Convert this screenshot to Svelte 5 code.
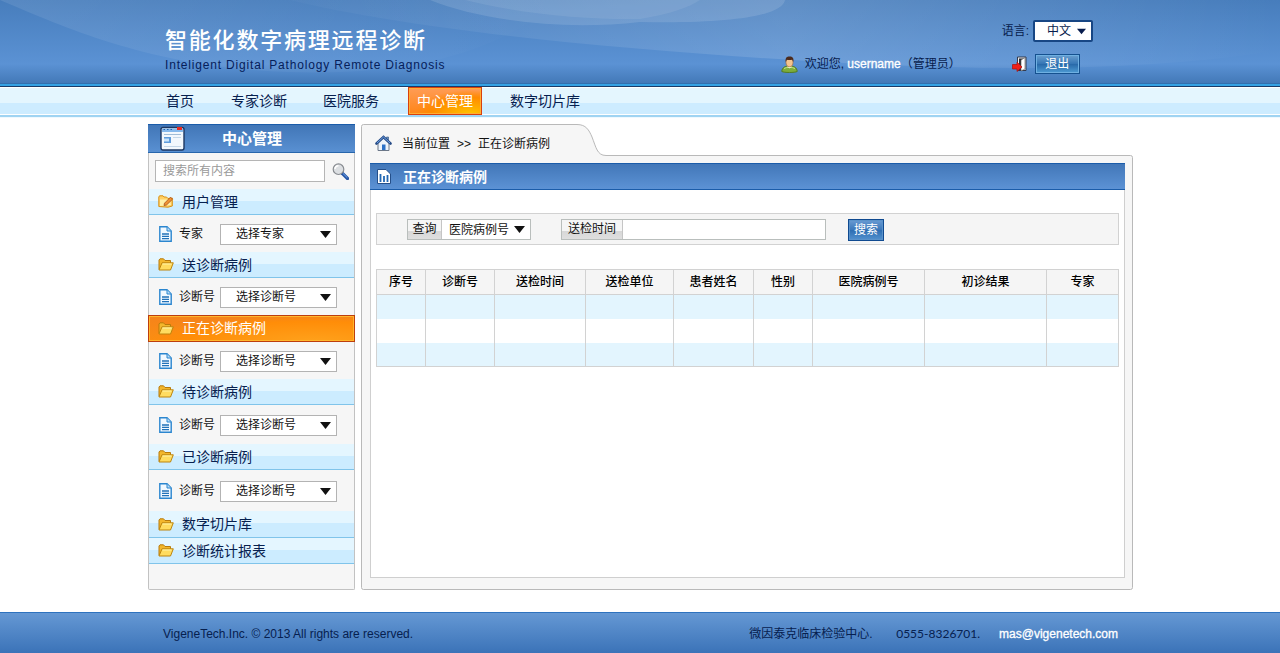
<script lang="ts">
	type MenuItem = {
		title: string;
		label?: string;
		option?: string;
		active?: boolean;
		edit?: boolean;
		size?: string;
	};

	const nav = ['首页', '专家诊断', '医院服务', '中心管理', '数字切片库'];

	const menu: MenuItem[] = [
		{ title: '用户管理', label: '专家', option: '选择专家', edit: true },
		{ title: '送诊断病例', label: '诊断号', option: '选择诊断号' },
		{ title: '正在诊断病例', label: '诊断号', option: '选择诊断号', active: true },
		{ title: '待诊断病例', label: '诊断号', option: '选择诊断号', size: 'mid' },
		{ title: '已诊断病例', label: '诊断号', option: '选择诊断号', size: 'tall' },
		{ title: '数字切片库' },
		{ title: '诊断统计报表' }
	];

	const columns = [
		{ name: '序号', width: 49 },
		{ name: '诊断号', width: 69 },
		{ name: '送检时间', width: 91 },
		{ name: '送检单位', width: 88 },
		{ name: '患者姓名', width: 80 },
		{ name: '性别', width: 59 },
		{ name: '医院病例号', width: 112 },
		{ name: '初诊结果', width: 122 },
		{ name: '专家', width: 72 }
	];

	let current = $state('中心管理');
</script>

{#snippet arrow()}
	<svg class="arrow" viewBox="0 0 11 7" width="11" height="7"><path d="M0 0H11L5.5 7Z" fill="currentColor" /></svg>
{/snippet}

<header class="top">
	<svg class="waves" viewBox="0 0 1280 83" preserveAspectRatio="none">
		<defs>
			<linearGradient id="wave-a" x1="0" x2="1" y1="0" y2="0">
				<stop offset="0" stop-color="#fff" stop-opacity="0.02" />
				<stop offset="0.5" stop-color="#fff" stop-opacity="0.13" />
				<stop offset="1" stop-color="#fff" stop-opacity="0" />
			</linearGradient>
			<linearGradient id="wave-b" x1="0" x2="1" y1="0" y2="0">
				<stop offset="0" stop-color="#fff" stop-opacity="0.09" />
				<stop offset="1" stop-color="#fff" stop-opacity="0" />
			</linearGradient>
		</defs>
		<path d="M0 0C60 25 150 68 290 72C420 76 500 50 560 0Z" fill="url(#wave-b)" />
		<path d="M290 0C430 34 660 53 860 64C1020 71 1160 70 1280 50V0Z" fill="url(#wave-a)" />
		<path d="M430 0C480 20 560 31 640 22C730 24 782 16 785 0Z" fill="#fff" fill-opacity="0.12" />
		<path d="M465 0C520 14 590 20 640 19C670 14 690 7 700 0Z" fill="#fff" fill-opacity="0.08" />
	</svg>
	<div class="wrap head-row">
		<div class="brand">
			<h1>智能化数字病理远程诊断</h1>
			<p>Inteligent Digital Pathology Remote Diagnosis</p>
		</div>
		<div class="tools">
			<div class="lang">
				<span>语言:</span>
				<button class="lang-select" type="button">中文 {@render arrow()}</button>
			</div>
			<div class="user">
				<svg width="17" height="17" viewBox="0 0 17 17">
					<path d="M.8 15.5C1 11.5 4 10 8.500 10S16 11.500 16.200 15.500C14 16.800 3 16.800.8 15.500Z" fill="#7dad3b" stroke="#527b24" />
					<path d="M3 12.500C5 11 12 11 14 12.500" fill="none" stroke="#c5e48b" />
					<path d="M6 10L8.500 12.500 11 10Z" fill="#f4f0df" />
					<ellipse cx="8.500" cy="6.200" rx="3.500" ry="4.500" fill="#f3c48f" stroke="#9a6330" stroke-width=".6" />
					<path d="M4.800 6C3.800 1 7 .3 9 .6C12 .6 13 3 12.200 6L11.200 3.700C9 4.300 7 4.200 5.800 3.700Z" fill="#4c2b1d" />
				</svg>
				<span class="hello">欢迎您, <b>username</b>（管理员）</span>
				<svg class="door" width="15" height="16" viewBox="0 0 15 16">
					<path d="M5.500 1H14V14.500H5.500Z" fill="#eee" stroke="#333b4e" />
					<path d="M7 2.500H12V12L8.500 14.500H7Z" fill="#2b2d35" />
					<path d="M9 4L13 1.500V13L9 15Z" fill="#fff" stroke="#555" stroke-width=".6" />
					<path d="M.5 8.500H5V6L10 11 5 15.500V13H.5Z" fill="#ef2018" stroke="#a9100d" stroke-width=".7" />
				</svg>
				<button class="logout" type="button">退出</button>
			</div>
		</div>
	</div>
</header>

<nav class="nav">
	<div class="wrap nav-row">
		{#each nav as item}
			<button type="button" class:current={item === current} onclick={() => (current = item)}>{item}</button>
		{/each}
	</div>
</nav>

<div class="wrap content">
	<aside class="sidebar">
		<h2>
			<svg width="25" height="25" viewBox="0 0 25 25">
				<rect x="1" y="1.500" width="23" height="22.500" rx="2" fill="#f3f8fd" stroke="#1c3761" stroke-width="1.400" />
				<path d="M2 2.500H23V6H2Z" fill="#85b8ec" />
				<path d="M3.500 3.500h1.500M7 3.500h1.500M10.500 3.500h1.500" stroke="#2163ad" />
				<rect x="17" y="1" width="5" height="3" fill="#e82a20" />
				<path d="M4 8.500H21" stroke="#a2bdd7" />
				<path d="M4 11H11V17H4Z" fill="#5f9cdc" />
				<path d="M4 12.500H9V15.500H4Z" fill="#c9e4fc" />
				<path d="M13 11.500H21M4 20.500H21" stroke="#c5d7e8" />
			</svg>
			<span>中心管理</span>
		</h2>
		<div class="search">
			<input placeholder="搜索所有内容" />
			<svg width="17" height="17" viewBox="0 0 17 17">
				<path d="M10 10L15.500 15.500" stroke="#2454a4" stroke-width="3.200" stroke-linecap="round" />
				<path d="M11 10.500L15.300 14.700" stroke="#75aaf0" stroke-width="1" />
				<circle cx="6.500" cy="6.200" r="5.300" fill="#dcdfe2" stroke="#888c91" stroke-width="1.200" />
				<path d="M3 6A3.500 3.500 0 0 1 6.500 2.700" fill="none" stroke="#fff" stroke-width="1.500" />
			</svg>
		</div>
		{#each menu as item}
			<div class="section" class:active={item.active} class:slim={item.title === '数字切片库'}>
				<svg width="16" height="13" viewBox="0 0 16 13">
					{#if item.edit}
						<path d="M.8 2V11.500L10 12.200 14.300 11V3L10 3.500 8.500 2H6L5 .8H1.500Z" fill="#ffd166" stroke="#d99115" />
						<path d="M2 4.500H12L13 10 2 11Z" fill="#fff0a8" />
						<path d="M6 10.500L6.500 8.200 12.500 2.200 14.500 4.200 8.500 10Z" fill="#f09332" stroke="#a64e1c" stroke-width=".8" />
					{:else}
						<path d="M1 11.500V2L2 .8H5.500L7 2.500H12.500V5" fill="#f3b72c" stroke="#b97b0b" />
						<path d="M1 12L4 4.800H15.300L12.500 12Z" fill="#ffdc60" stroke="#bd840d" />
						<path d="M4.500 6H13.500" stroke="#fff3a9" />
					{/if}
				</svg>
				<span>{item.title}</span>
			</div>
			{#if item.option}
				<div class="choice {item.size ?? ''}">
					<svg width="13" height="16" viewBox="0 0 13 16">
						<path d="M.8 .8H8L12.200 5V15.200H.8Z" fill="#f2f9ff" stroke="#2b86cf" stroke-width="1.400" />
						<path d="M8 1V5H12" fill="#b9dcf7" stroke="#2b86cf" />
						<path d="M3 8H10M3 10.300H10M3 12.600H10" stroke="#2272b8" stroke-width="1.300" />
					</svg>
					<span>{item.label}</span>
					<button type="button" class="select">{item.option} {@render arrow()}</button>
				</div>
			{/if}
		{/each}
	</aside>

	<main class="main">
		<svg class="frame" width="772" height="466" viewBox="0 0 772 466">
			<path d="M.5 2.500Q.5 .5 2.500 .5H216C225 .5 228 6 231 13C235 23 236 31.500 245 31.500H769.500Q771.500 31.500 771.500 33.500V463.500Q771.500 465.500 769.500 465.500H2.500Q.5 465.500 .5 463.500Z" fill="#f6f6f6" stroke="#b9b9b9" />
		</svg>
		<div class="crumbs">
			<svg width="17" height="17" viewBox="0 0 17 17">
				<path d="M3 8L8.500 3 14 8V15.500H3Z" fill="#edf3fb" stroke="#6b7788" />
				<path d="M11.500 2H13.500V6L11.500 4Z" fill="#6d94c5" stroke="#31527d" stroke-width=".6" />
				<path d="M1.500 8.500L8.500 2 15.500 8.500" fill="none" stroke="#284d88" stroke-width="2.600" stroke-linecap="round" />
				<path d="M2 8L8.500 2 15 8" fill="none" stroke="#6da1e6" stroke-width="1" />
				<path d="M7 15V9.500H10.500V15Z" fill="#2c71c7" />
			</svg>
			<span>当前位置</span><span class="sep">&gt;&gt;</span><span>正在诊断病例</span>
		</div>
		<section class="panel">
			<h2>
				<svg width="14" height="15" viewBox="0 0 14 15">
					<path d="M.5 .5H9L13.500 5V14.500H.5Z" fill="#fff" stroke="#244f8a" />
					<path d="M3.500 5V13M7 7V13M10.500 6V13" stroke="#2268b4" stroke-width="1.800" />
				</svg>
				正在诊断病例
			</h2>
			<div class="filter">
				<div class="field query">
					<span class="tag">查询</span>
					<button type="button">医院病例号 {@render arrow()}</button>
				</div>
				<div class="field date">
					<span class="tag">送检时间</span>
					<input aria-label="送检时间" />
				</div>
				<button class="go" type="button">搜索</button>
			</div>
			<table>
				<colgroup>
					{#each columns as col}
						<col style="width: {col.width}px" />
					{/each}
				</colgroup>
				<thead>
					<tr>
						{#each columns as col}<th>{col.name}</th>{/each}
					</tr>
				</thead>
				<tbody>
					{#each [1, 2, 3] as row (row)}
						<tr>
							{#each columns as col (col.name)}<td></td>{/each}
						</tr>
					{/each}
				</tbody>
			</table>
		</section>
	</main>
</div>

<footer class="footer">
	<div class="wrap foot-row">
		<span class="copy">VigeneTech.Inc. © 2013 All rights are reserved.</span>
		<span class="center">微因泰克临床检验中心.</span>
		<span class="tel">0555-8326701.</span>
		<a href="mailto:mas@vigenetech.com">mas@vigenetech.com</a>
	</div>
</footer>

<style>
	:global(body) {
		background: #fff;
		font-family: 'Liberation Sans', 'Noto Sans CJK SC', sans-serif;
		font-size: 12px;
		line-height: 18px;
		color: #111;
	}

	:global(*) {
		box-sizing: border-box;
	}

	h1,
	h2,
	p {
		margin: 0;
	}

	button,
	input {
		margin: 0;
		padding: 0;
		font: inherit;
		color: inherit;
		border-radius: 0;
		outline: none;
	}

	svg {
		display: block;
		flex: none;
	}

	.wrap {
		width: 985px;
		margin-left: 148px;
	}

	/* Header */
	.top {
		position: relative;
		height: 87px;
		background: linear-gradient(#477dbc, #5b92d4 64px, #4379b8 83px, #326fae 83px, #326fae 84px, #35a2e4 84px, #35a2e4 86px, #193b68 86px);
	}

	.waves {
		position: absolute;
		top: 0;
		left: 0;
		width: 100%;
		height: 83px;
	}

	.head-row {
		position: relative;
		display: flex;
		justify-content: space-between;
		padding: 20px 40px 0 17px;
	}

	.brand h1 {
		padding-top: 5px;
		font-size: 22px;
		font-weight: 500;
		line-height: 32px;
		letter-spacing: 1.8px;
		color: #fff;
	}

	.brand p {
		margin-top: -1px;
		letter-spacing: 0.82px;
		color: #06205a;
	}

	.tools {
		color: #071c4d;
	}

	.lang,
	.user {
		display: flex;
		align-items: center;
	}

	.lang {
		padding-left: 221px;
		gap: 4px;
	}

	.lang-select {
		display: flex;
		align-items: center;
		justify-content: space-between;
		width: 60px;
		height: 22px;
		padding: 0 5px 0 12px;
		border: 2px solid #174684;
		border-radius: 2px;
		background: #fff;
	}

	.lang-select .arrow,
	.lang-select :global(.arrow) {
		width: 9px;
	}

	.user {
		margin-top: 12px;
	}

	.hello {
		margin-left: 7px;
		width: 172px;
		white-space: nowrap;
	}

	.user b {
		font-weight: 400;
		color: #fff;
		-webkit-text-stroke: 0.3px #fff;
	}

	.door {
		margin-left: 35px;
	}

	.logout {
		width: 45px;
		height: 20px;
		margin-left: 8px;
		border: 1px solid #15518f;
		box-shadow: inset 0 0 0 1px #6fb0e2;
		background: linear-gradient(#6a9fd0, #3475b4 50%, #2869a9 51%, #4e9cd4);
		line-height: 16px;
		color: #fff;
	}

	/* Navigation */
	.nav {
		height: 31px;
		background: linear-gradient(#fff 1px, #e4f6fe 1px, #e4f6fe 16px, #cdecff 16px, #cdecff 27px, #fff 27px, #fff 28px, #a0d4f2 28px, #a0d4f2 30px, #eef9ff 30px);
	}

	.nav-row {
		display: flex;
		padding-left: 10px;
	}

	.nav button {
		height: 28px;
		margin-right: 20px;
		padding: 0 8px;
		border: 0;
		background: none;
		font-size: 14px;
		line-height: 28px;
		color: #06204f;
	}

	.nav button:nth-child(2),
	.nav button:nth-child(4) {
		margin-left: 1px;
	}

	.nav .current {
		border: 1px solid #d9400c;
		box-shadow: inset 0 0 0 1px #ffad35;
		background: radial-gradient(ellipse at 85% 100%, #ffc400, #ff8b00 45%, transparent 65%), linear-gradient(#ff9c55, #ff8518);
		color: #fff;
		line-height: 26px;
	}

	/* Content */
	.content {
		display: flex;
		gap: 6px;
		padding-top: 6px;
		height: 494px;
	}

	.sidebar {
		width: 207px;
		height: 466px;
		border: 1px solid #c2c2c2;
		border-top: 0;
		border-radius: 0 0 2px 2px;
		background: #f6f6f6;
	}

	.sidebar h2 {
		display: flex;
		align-items: center;
		height: 29px;
		margin: 0 -1px;
		padding-left: 12px;
		border-top: 1px solid #1b5ca9;
		border-bottom: 1px solid #2866ac;
		background: linear-gradient(#4176b7, #5990d2);
		font-size: 15px;
		line-height: 27px;
		color: #fff;
	}

	.sidebar h2 span {
		margin-left: 37px;
	}

	.search {
		display: flex;
		gap: 7px;
		height: 36px;
		padding: 7px 6px;
	}

	.search input {
		width: 170px;
		height: 22px;
		padding: 0 7px;
		border: 1px solid #b5b5b5;
		background: #fff;
	}

	.search input::placeholder {
		color: #999;
		opacity: 1;
	}

	.search svg {
		margin-top: 3px;
	}

	.section {
		display: flex;
		align-items: center;
		gap: 8px;
		height: 26px;
		padding-left: 9px;
		border-bottom: 1px solid #80c4ea;
		background: linear-gradient(#e4f6ff 12px, #ccecff 12px);
		font-size: 14px;
		line-height: 26px;
		color: #06204f;
	}

	.section.slim {
		height: 27px;
	}

	.section.active {
		height: 27px;
		margin: 0 -1px;
		padding-left: 9px;
		border: 1px solid #bd3e0d;
		box-shadow: inset 0 0 0 1px #ffb62d;
		background: radial-gradient(ellipse at 80% 100%, #ffa11b, #ff8d08 55%, transparent 72%), linear-gradient(#f5831b, #fb8e12);
		line-height: 25px;
		color: #fff;
	}

	.choice {
		display: flex;
		align-items: center;
		height: 37px;
		padding: 1px 0 0 10px;
	}

	.choice.mid {
		height: 39px;
	}

	.choice.tall {
		height: 41px;
	}

	.choice span {
		width: 41px;
		margin-left: 7px;
	}

	.select {
		display: flex;
		align-items: center;
		justify-content: space-between;
		width: 117px;
		height: 21px;
		padding: 0 5px 0 15px;
		border: 1px solid #b3b3b3;
		background: #fff;
	}

	/* Main frame */
	.main {
		position: relative;
		width: 772px;
		height: 466px;
		padding: 0 9px;
	}

	.frame {
		position: absolute;
		top: 0;
		left: 0;
	}

	.crumbs {
		position: relative;
		display: flex;
		align-items: center;
		height: 39px;
		padding-left: 5px;
	}

	.crumbs svg {
		margin-right: 10px;
	}

	.sep {
		margin: 0 7px;
	}

	.panel {
		position: relative;
		width: 755px;
		height: 415px;
		border: 1px solid #cfcfcf;
		border-top: 0;
		background: #fff;
	}

	.panel h2 {
		display: flex;
		align-items: center;
		gap: 12px;
		height: 27px;
		margin: 0 -1px;
		padding-left: 7px;
		border-top: 1px solid #1b5ca9;
		border-bottom: 1px solid #1b5ca9;
		background: linear-gradient(#4277b8, #5c92d5);
		font-size: 14px;
		color: #fff;
	}

	.filter {
		display: flex;
		align-items: flex-start;
		width: 743px;
		height: 32px;
		margin: 23px 0 24px 5px;
		padding: 5px 0 0 30px;
		border: 1px solid #d2d2d2;
		background: #f5f5f5;
	}

	.field {
		display: flex;
		height: 21px;
		border: 1px solid #b9bebc;
		background: #fff;
	}

	.query {
		width: 124px;
	}

	.date {
		width: 265px;
		margin: 0 22px 0 30px;
	}

	.tag {
		flex: none;
		width: 34px;
		border-right: 1px solid #c5c5c5;
		background: linear-gradient(#f5f5f5 11px, #d7d7d7 11px, #dfdfdf);
		line-height: 19px;
		text-align: center;
	}

	.date .tag {
		width: 61px;
	}

	.field button,
	.field input {
		display: flex;
		flex: 1;
		align-items: center;
		justify-content: space-between;
		min-width: 0;
		padding: 0 5px 0 7px;
		border: 0;
		background: #fff;
		white-space: nowrap;
	}

	.go {
		width: 36px;
		height: 22px;
		border: 1px solid #104a90;
		box-shadow: inset 0 0 0 1px #5a92ca;
		background: linear-gradient(#6a9bd3, #3875b9 52%, #2e6eb3 52%, #5391ce);
		color: #fff;
	}

	table {
		width: 743px;
		margin-left: 5px;
		border-collapse: collapse;
		table-layout: fixed;
	}

	th,
	td {
		padding: 0;
		border: 1px solid #d2d2d2;
	}

	th {
		height: 25px;
		background: #f5f5f5;
		font-weight: 500;
		color: #000;
	}

	td {
		height: 24px;
		border-top: 0;
		border-bottom: 0;
	}

	tbody {
		border-bottom: 1px solid #d2d2d2;
	}

	tbody tr:nth-child(odd) {
		background: #e3f5fe;
	}

	/* Footer */
	.footer {
		height: 41px;
		border-top: 1px solid #2e72be;
		background: linear-gradient(#6598d4, #3b73b8);
		color: #06204f;
	}

	.foot-row {
		display: flex;
		padding: 12px 15px 0;
	}

	.copy {
		width: 587px;
	}

	.center {
		width: 147px;
	}

	.tel {
		width: 103px;
		font-family: Lato, sans-serif;
	}

	.footer a {
		color: #fff;
		text-decoration: none;
		-webkit-text-stroke: 0.3px #fff;
	}
</style>
